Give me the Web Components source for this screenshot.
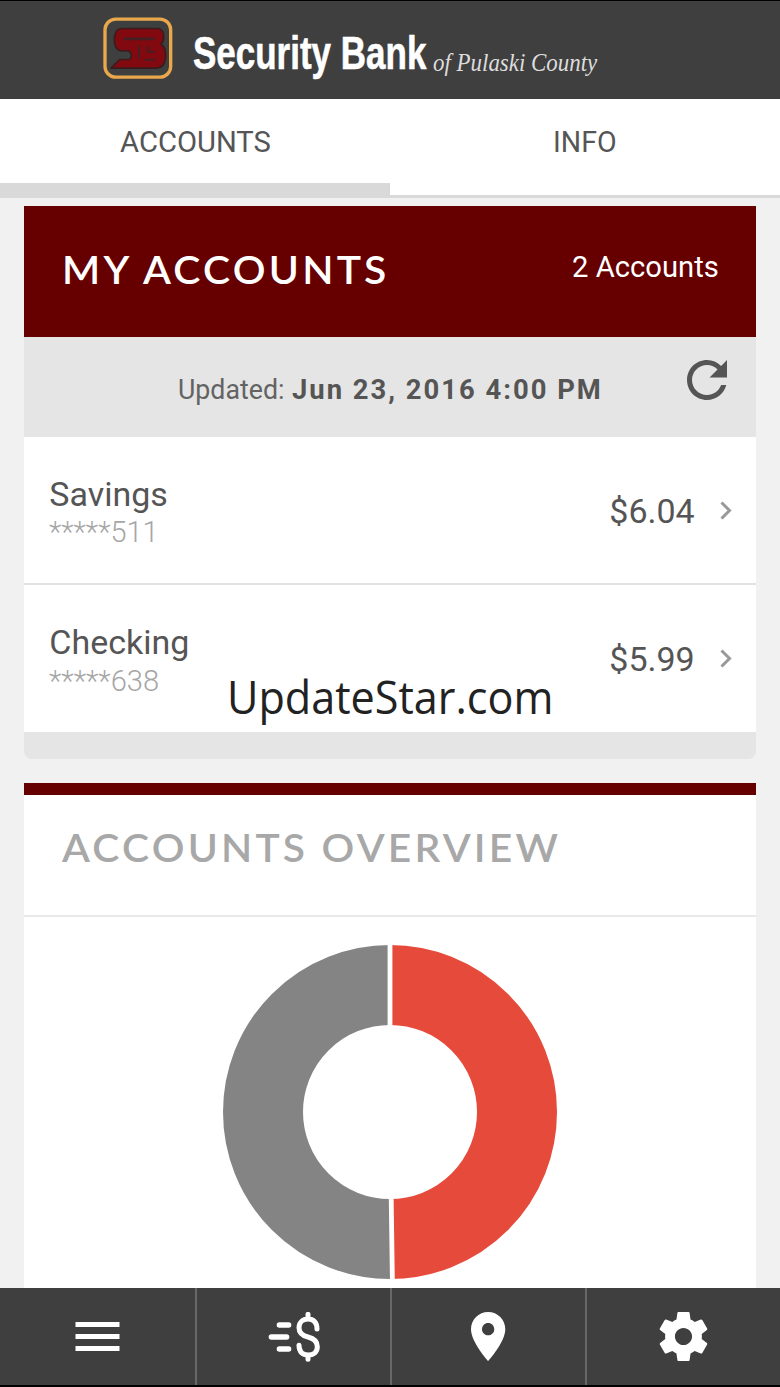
<!DOCTYPE html>
<html lang="en">
<head>
<meta charset="utf-8">
<title>Security Bank</title>
<style>
html,body{margin:0;padding:0;background:#000}
body{font-family:Roboto,"Liberation Sans",sans-serif;color:#555;width:780px;height:1387px;overflow:hidden}
</style>
</head>
<body>
<bank-app></bank-app>
<script>
const define=(name,html,ready)=>{
  const t=document.createElement('template');t.innerHTML=html;
  customElements.define(name,class extends HTMLElement{
    constructor(){super();this.attachShadow({mode:'open'}).append(t.content.cloneNode(true));}
    connectedCallback(){if(ready)ready.call(this,this.shadowRoot);}
  });
};

/* A single line of text, set to an exact width in px. */
define('fit-text',`<style>:host{display:block;white-space:nowrap;line-height:40px;height:40px;flex:none}
span{display:inline-block;transform-origin:0 50%}</style><span><slot></slot></span>`,function(r){
  const w=+this.getAttribute('w'),s=r.querySelector('span');
  this.style.width=w+'px';
  const ls=parseFloat(getComputedStyle(this).letterSpacing)||0;
  const n=s.offsetWidth-ls;
  if(n>0)s.style.transform='scaleX('+(w/n)+')';
});

define('bank-logo',`<style>:host{display:block;width:70px;height:62px}svg{display:block}</style>
<svg width="70" height="62" viewBox="10 15.500 210 186">
<rect x="16" y="22" width="197" height="174" rx="32" fill="#3d403e" stroke="#e9a84c" stroke-width="10"/>
<path fill="#82090f" stroke="#3b1c1e" stroke-width="5" stroke-linejoin="round" d="M64 50H176Q194 54 192 78Q192 90 184 97Q200 106 198 135Q196 166 172 169H34L60 143H86Q95 142 95 131Q95 122 86 117H62Q44 112 44 84Q44 52 64 50Z"/>
<g fill="none" stroke="#452022" stroke-linecap="round" stroke-linejoin="round" stroke-width="6"><path stroke-width="8" d="M76 81H160"/><path d="M118 104V138M144 104V120H162M138 144H162"/></g></svg>`);

define('app-header',`<style>:host{display:flex;box-sizing:border-box;height:98.600px;background:#3f3f3f;border-top:1.500px solid #000;padding-left:103px;color:#fff}
bank-logo{margin-top:16.500px;position:relative;top:-.500px}
.n{font:bold 47px "Liberation Sans Narrow","Liberation Sans",sans-serif;line-height:40px;margin:32px 0 0 19.500px;-webkit-text-stroke:.6px #fff}
.c{font:italic 26px "Liberation Serif",serif;line-height:40px;margin:41.500px 0 0 7px;color:#ddd}</style>
<bank-logo></bank-logo><fit-text class="n" w="233">Security Bank</fit-text><fit-text class="c" w="164">of Pulaski County</fit-text>`);

define('tab-item',`<style>:host{display:flex;flex:1;justify-content:center;box-sizing:border-box;padding-top:23px;font-size:29px;border-bottom:3px solid #d9d9d9}
:host([active]){border-bottom:15px solid #d9d9d9}</style><slot></slot>`);

define('tab-bar',`<style>:host{display:flex;height:99.900px;background:#fff}</style>
<tab-item active><fit-text w="151">ACCOUNTS</fit-text></tab-item><tab-item><fit-text w="64">INFO</fit-text></tab-item>`);

define('account-row',`<style>:host{display:flex;box-sizing:border-box;height:148.500px;background:#fff;border-bottom:2px solid #e2e2e2;padding-left:25px}
:host([last]){border:0;height:147px}
.l{flex:1;padding-top:37px}
.name{font-size:34px}.num{font-size:30px;font-weight:300;color:#a6a6a6;margin-top:-1.800px}
.amt{font-size:34px;margin-top:54px}
svg{margin:64px 24px 0 25.500px;flex:none}</style>
<div class="l"><fit-text class="name"></fit-text><fit-text class="num"></fit-text></div>
<fit-text class="amt" w="85"></fit-text>
<svg width="12" height="19" viewBox="0 0 12 19"><path d="M1.500 1.500L9.500 9.500L1.500 17.500" fill="none" stroke="#999" stroke-width="3"/></svg>`,function(r){
  const put=(sel,txt,w)=>{const e=r.querySelector(sel);e.textContent=txt;if(w)e.setAttribute('w',w);e.connectedCallback();};
  put('.name',this.getAttribute('name'),this.getAttribute('name-w'));
  put('.num',this.getAttribute('num'),this.getAttribute('num-w'));
  put('.amt',this.getAttribute('amount'));
});

define('accounts-card',`<style>:host{display:block;width:731.500px;margin:7.500px 0 0 24.300px}
.h{display:flex;justify-content:space-between;box-sizing:border-box;height:131.500px;background:#600;color:#fff;padding:0 36.500px 0 38px}
.t{font:bold 38px Lato,sans-serif;line-height:40px;letter-spacing:3px;margin-top:43.500px;font-weight:600}
.c{font-size:29px;margin-top:41px}
.u{display:flex;box-sizing:border-box;height:99.500px;background:#e5e5e5;padding:32.500px 29px 0 153.500px;font-size:27.500px;color:#636363}
.d{font-weight:700;letter-spacing:2px;color:#555;margin-left:7px}
svg{margin:-9.500px 0 0 auto;flex:none}
.f{height:26.500px;background:#e5e5e5;border-radius:0 0 8px 8px}</style>
<div class="h"><fit-text class="t" w="324">MY ACCOUNTS</fit-text><fit-text class="c" w="147">2 Accounts</fit-text></div>
<div class="u"><fit-text w="107">Updated:</fit-text><fit-text class="d" w="309">Jun 23, 2016 4:00 PM</fit-text>
<svg width="40" height="40" viewBox="4 4 16 16"><path fill="#555" d="M17.650 6.350C16.200 4.900 14.210 4 12 4c-4.420 0-7.990 3.580-7.990 8s3.570 8 7.990 8c3.730 0 6.840-2.550 7.730-6h-2.080c-.820 2.330-3.040 4-5.650 4-3.310 0-6-2.690-6-6s2.690-6 6-6c1.660 0 3.140.690 4.220 1.780L13 11h7V4l-2.350 2.350z"/></svg></div>
<account-row name="Savings" name-w="119" num="*****511" num-w="110" amount="$6.04"></account-row>
<account-row last name="Checking" name-w="140" num="*****638" num-w="110.500" amount="$5.99"></account-row>
<div class="f"></div>`);

define('donut-chart',`<style>:host{display:flex;justify-content:center;padding-top:25px}svg{flex:none}</style>
<svg width="340" height="340" viewBox="-170 -170 340 340" fill="none" stroke-width="80">
<path stroke="#848484" d="M0-127A127 127 0 0 0 0 127"/><path stroke="#e64a3b" d="M0-127A127 127 0 0 1 0 127"/>
<path stroke="#fff" stroke-width="4.800" d="M0-170V0L2.400 170"/></svg>`);

define('overview-card',`<style>:host{display:block;box-sizing:border-box;width:731.500px;height:600px;margin:24.500px 0 0 24.300px;background:#fff;border-top:12.500px solid #600}
.h{box-sizing:border-box;height:122px;border-bottom:2.500px solid #e9e9e9;padding:31.500px 0 0 37.500px}
.h fit-text{font:bold 38px Lato,sans-serif;line-height:40px;letter-spacing:3px;color:#a8a8a8;font-weight:600}</style>
<div class="h"><fit-text w="496">ACCOUNTS OVERVIEW</fit-text></div><donut-chart></donut-chart>`);

define('nav-item',`<style>:host{display:flex;flex:1;align-items:center;justify-content:center;box-sizing:border-box;border-right:2px solid #686868}
:host([last]){border:0}</style><slot></slot>`);

define('bottom-nav',`<style>:host{display:flex;box-sizing:border-box;height:99px;flex:none;background:#3f3f3f;border-bottom:2px solid #000}
nav-item:first-of-type{flex:0 0 197px}svg{display:block}</style>
<nav-item><svg width="45" height="30" viewBox="0 0 45 30"><path d="M.500 0h44v5h-44zM.500 12h44v5h-44zM.500 24h44v5h-44z" fill="#fff"/></svg></nav-item>
<nav-item><svg width="52" height="50" viewBox="804 126 156 150" fill="none" stroke="#fff" stroke-linecap="round"><path stroke-width="16" d="M838 165h28M814 201h46M838 237h28"/><path stroke-width="15" d="M951 177C951 157 940 147 924 147S897 158 897 173C897 190 908 197 924 201S952 213 952 230S940 255 924 255S897 246 897 226M924 133v12M924 256v12"/></svg></nav-item>
<nav-item><svg width="34.300" height="49" viewBox="5 2 14 20"><path fill="#fff" d="M12 2C8.130 2 5 5.130 5 9c0 5.250 7 13 7 13s7-7.750 7-13c0-3.870-3.130-7-7-7zm0 9.500c-1.380 0-2.500-1.120-2.500-2.500s1.120-2.500 2.500-2.500 2.500 1.120 2.500 2.500-1.120 2.500-2.500 2.500z"/></svg></nav-item>
<nav-item last><svg width="49" height="49" viewBox="2 2 20 20"><path fill="#fff" d="M19.430 12.980c.040-.320.070-.640.070-.980s-.030-.660-.070-.980l2.110-1.650c.190-.150.240-.420.120-.640l-2-3.460c-.120-.220-.390-.300-.610-.220l-2.490 1c-.520-.400-1.080-.730-1.690-.980l-.380-2.650C14.460 2.180 14.250 2 14 2h-4c-.250 0-.460.180-.490.420l-.380 2.650c-.610.250-1.170.590-1.690.980l-2.490-1c-.230-.090-.490 0-.610.220l-2 3.460c-.130.220-.070.490.120.640l2.110 1.650c-.040.320-.070.650-.070.980s.030.660.070.980l-2.110 1.650c-.190.150-.240.420-.120.640l2 3.460c.120.220.390.300.610.220l2.490-1c.520.400 1.080.730 1.690.980l.380 2.650c.030.240.240.420.490.420h4c.250 0 .460-.180.490-.420l.380-2.650c.610-.250 1.170-.590 1.690-.980l2.490 1c.230.090.490 0 .610-.220l2-3.460c.120-.220.070-.490-.120-.640l-2.110-1.650zM12 15.500c-1.930 0-3.500-1.570-3.500-3.500s1.570-3.500 3.500-3.500 3.500 1.570 3.500 3.500-1.570 3.500-3.500 3.500z"/></svg></nav-item>`);

define('water-mark',`<style>:host{position:absolute;left:227px;top:676.500px;font:45px "Open Sans","Noto Sans",sans-serif;color:#222}</style><fit-text w="326"><slot></slot></fit-text>`,function(r){r.querySelector('fit-text').connectedCallback();});

define('bank-app',`<style>:host{display:flex;flex-direction:column;position:relative;width:780px;height:1387px;overflow:hidden;background:#f1f1f1}
main{flex:1;min-height:0;overflow:hidden}</style>
<app-header></app-header><tab-bar></tab-bar><main><accounts-card></accounts-card><overview-card></overview-card></main><bottom-nav></bottom-nav><water-mark>UpdateStar.com</water-mark>`);
</script>
</body>
</html>
